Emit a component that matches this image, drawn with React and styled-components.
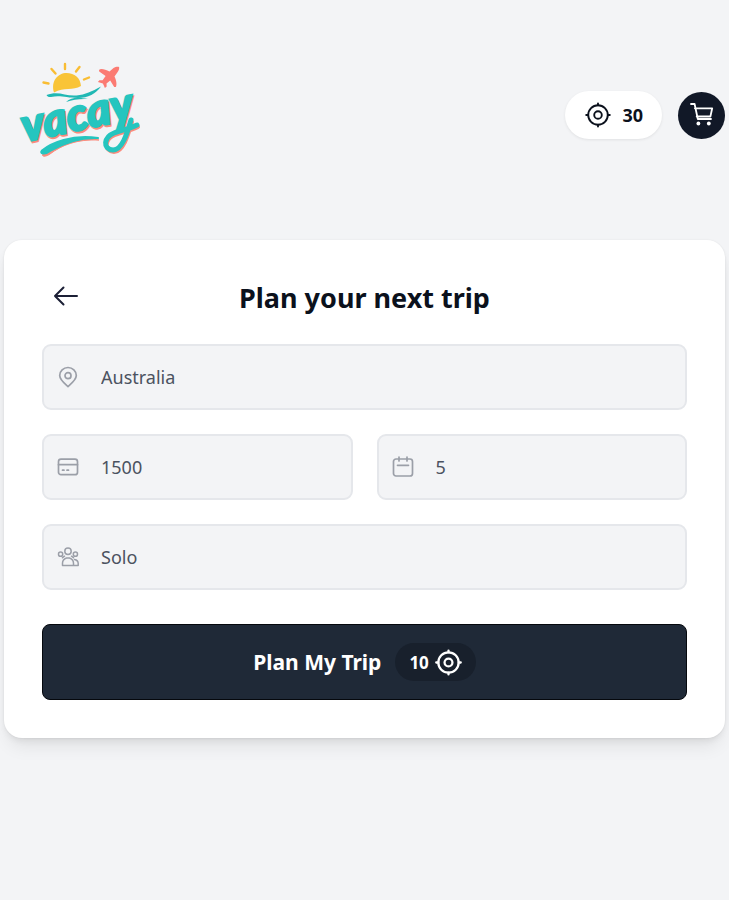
import React from "react";
import styled, { createGlobalStyle } from "styled-components";

const GlobalStyle = createGlobalStyle`
  * { box-sizing: border-box; }
  body {
    margin: 0;
    min-height: 100vh;
    background: #f3f4f6;
    color: #0b111c;
    font-family: "Noto Sans", "Open Sans", sans-serif;
  }
  button, input { font: inherit; }
`;

const Page = styled.div`
  padding: 52px 4px 40px;
`;

const Header = styled.header`
  display: flex;
  align-items: center;
  justify-content: space-between;
  height: 126px;
  margin-bottom: 62px;
`;

const HomeLink = styled.a`
  display: block;
  margin: 0 0 8px 12px;
`;

const LogoArt = styled.svg`
  display: block;
  width: 130px;
  height: 110px;
  overflow: visible;
`;

const LogoText = styled.text`
  font-family: Lato, sans-serif;
  font-weight: 900;
  font-style: italic;
  font-size: 46px;
`;

const Actions = styled.div`
  display: flex;
  align-items: center;
  gap: 16px;
`;

const Balance = styled.div`
  display: flex;
  align-items: center;
  gap: 11px;
  height: 48px;
  padding: 0 19px 0 20px;
  border-radius: 24px;
  background: #fff;
  box-shadow: 0 1px 3px rgba(0, 0, 0, 0.08);
  font-size: 18px;
  font-weight: 700;
`;

const CartButton = styled.button`
  display: grid;
  place-items: center;
  width: 47px;
  height: 47px;
  padding: 0;
  border: 0;
  border-radius: 50%;
  background: #111827;
  color: #fff;
  cursor: pointer;
`;

const Card = styled.main`
  padding: 38px;
  border-radius: 18px;
  background: #fff;
  box-shadow: 0 0 2px rgba(0, 0, 0, 0.08), 0 12px 18px -4px rgba(0, 0, 0, 0.08),
    0 4px 7px -2px rgba(0, 0, 0, 0.08);
`;

const CardHeader = styled.div`
  display: grid;
  grid-template-columns: 48px 1fr 48px;
  align-items: center;
  height: 40px;
  margin-bottom: 26px;
`;

const BackButton = styled.button`
  display: grid;
  place-items: center;
  height: 36px;
  margin-bottom: 4px;
  padding: 0;
  border: 0;
  background: none;
  color: #1c2036;
  cursor: pointer;
`;

const Title = styled.h1`
  margin: 0;
  font-size: 27px;
  line-height: 40px;
  font-weight: 700;
  text-align: center;
`;

const Form = styled.form`
  display: grid;
  grid-template-columns: repeat(2, minmax(0, 1fr));
  gap: 24px;
`;

const Field = styled.label`
  display: flex;
  align-items: center;
  gap: 22px;
  grid-column: ${(p) => (p.$wide ? "1 / -1" : "auto")};
  height: 66px;
  padding: 0 13px;
  border: 2px solid #e5e7eb;
  border-radius: 9px;
  background: #f3f4f6;
  color: #9b9fa8;
`;

const TextInput = styled.input`
  flex: 1;
  min-width: 0;
  padding: 0;
  border: 0;
  outline: 0;
  background: none;
  color: #4b5260;
  font-size: 18px;
  line-height: 28px;
`;

const SubmitButton = styled.button`
  grid-column: 1 / -1;
  display: flex;
  align-items: center;
  justify-content: center;
  gap: 14px;
  height: 76px;
  margin-top: 10px;
  border: 1px solid #05080d;
  border-radius: 8px;
  background: #1f2937;
  color: #fff;
  font-size: 21px;
  font-weight: 700;
  cursor: pointer;
`;

const Cost = styled.span`
  display: flex;
  align-items: center;
  gap: 6px;
  height: 38px;
  padding: 0 14px;
  border-radius: 19px;
  background: #18202c;
  font-size: 17px;
`;

const Icon = styled.svg.attrs({
  fill: "none",
  stroke: "currentColor",
  strokeLinecap: "round",
  strokeLinejoin: "round",
  "aria-hidden": true,
})`
  flex: none;
  display: block;
  width: ${(p) => p.$size}px;
  height: ${(p) => p.$size}px;
`;

function CoinIcon({ size, weight }) {
  return (
    <Icon $size={size} viewBox="0 0 26 26" strokeWidth={weight}>
      <circle cx="13" cy="13" r="9.8" />
      <circle cx="13" cy="13" r="3.8" />
      <path d="M13 1.5v1.7M13 22.8v1.7M1.2 13h2M22.8 13h2" />
    </Icon>
  );
}

function CartIcon() {
  return (
    <Icon $size={26} viewBox="0 0 26 26" strokeWidth="1.8">
      <path d="M2 2h3.6l3.2 15h13.2M5.9 6.3h17.3l-1.8 8.2H7.7" />
      <circle cx="9.4" cy="21.5" r="1.9" fill="currentColor" stroke="none" />
      <circle cx="19.8" cy="21.5" r="1.9" fill="currentColor" stroke="none" />
    </Icon>
  );
}

function ArrowIcon() {
  return (
    <Icon $size={26} viewBox="0 0 26 26" strokeWidth="2">
      <path d="M24 13H2M10.5 4.5 2 13l8.5 8.5" />
    </Icon>
  );
}

function PinIcon() {
  return (
    <Icon $size={22} viewBox="0 0 22 22" strokeWidth="1.7">
      <path d="M11 20.5C7 17 2.7 13.7 2.7 9.5a8.3 8 0 0 1 16.6 0c0 4.2-4.3 7.5-8.3 11Z" />
      <circle cx="11" cy="9.7" r="3" />
    </Icon>
  );
}

function CardIcon() {
  return (
    <Icon $size={22} viewBox="0 0 22 22" strokeWidth="1.7">
      <rect x="1.5" y="3.2" width="19" height="15.5" rx="2.5" />
      <path d="M1.5 8.7h19M5.5 14.2h1.5M10 14.2h1.5" />
    </Icon>
  );
}

function CalendarIcon() {
  return (
    <Icon $size={22} viewBox="0 0 22 22" strokeWidth="1.7">
      <rect x="1.5" y="3" width="19" height="17" rx="2.5" />
      <path d="M7 1v4M15 1v4M5.5 9.3h11" />
    </Icon>
  );
}

function PeopleIcon() {
  return (
    <Icon $size={22} viewBox="0 0 22 22" strokeWidth="1.5">
      <circle cx="11" cy="5.2" r="3.2" />
      <circle cx="3.6" cy="8.2" r="2.1" />
      <circle cx="18.4" cy="8.2" r="2.1" />
      <path d="M5.5 19.5v-2.2c0-2.7 1.5-4.5 4-5.3h3c2.5.8 4 2.6 4 5.3v2.2ZM17.5 13.5c2.5.5 3.7 1.8 3.7 4v2h-4.700M5.500 11.700l2-1.500M16.500 11.700l-2-1.500" />
    </Icon>
  );
}

function Logo() {
  return (
    <LogoArt viewBox="0 0 130 110" role="img" aria-label="Vacay">
      <path
        d="M27.5 26.500l5 1M35.500 13l4 4.500M49 8v5M63.500 11l-3.500 4.500M73 21.500l-5 2"
        fill="none"
        stroke="#f9bd34"
        strokeWidth="2.4"
        strokeLinecap="round"
      />
      <path
        d="M38 36.500C34.500 25 42 17 50.500 17c8 0 14 5 14.500 13-8 5-17 1-27 6.500Z"
        fill="#f9c437"
      />
      <path
        d="M30.500 39c12-4.500 19 1.500 30 .5 9-1 15-4 24.500-9-5 7-13 11.500-23 11.500-12 0-17-3-27-1-2 .3-4-.5-4.500-2Z"
        fill="#20b8b4"
      />
      <path d="M50 46c6-6 14-4.500 22-3-8-.5-15 .5-22 3Z" fill="#20b8b4" />
      <path
        d="M83 14c1.500-1.800 6-.8 10.500 1.500l4-3.500c2-1.500 5-1.500 5.500-1 .6.6 0 3.500-1.500 5.200l-3 4.300c2 4 2.600 8.500 1.300 10.500h-1.600l-4-6.500-3.700 3 .2 3-1.800 1.500-2-4.500-5-1.500 1.500-1.800h3.200l3-4.200-6.400-4.500Z"
        fill="#fb7b73"
      />
      <g fill="none" strokeLinecap="round">
        <path
          d="M116 66C112 80 107 96 98 96c-11-1-9-13 1-17 7-3 15-4 23-8"
          stroke="#fb8b7d"
          strokeWidth="4"
        />
        <g transform="rotate(-12 8 84)">
          <LogoText x="9" y="88" fill="#fb8b7d" stroke="#fb8b7d" strokeWidth="2">vacay</LogoText>
        </g>
        <path
          d="M115 64C111 78 106 94 97 94c-11-1-9-13 1-17 7-3 15-4 23-8"
          stroke="#25c5bf"
          strokeWidth="5"
        />
        <g transform="rotate(-12 8 84)">
          <LogoText x="8" y="86" fill="#25c5bf" stroke="#25c5bf" strokeWidth="2">vacay</LogoText>
        </g>
      </g>
      <path
        d="M27 98c8-9 28-19 56-14-22-1-37 5-49 14-4 3-9 3-7 0Z"
        fill="#fb8b7d"
        stroke="#fb8b7d"
        strokeWidth="1"
      />
      <path
        d="M26 94.500C35 87 56 78 82 82c-20-1-36 6-48 13-5 4-11 3-8-.5Z"
        fill="#25c5bf"
        stroke="#25c5bf"
        strokeWidth="2"
        strokeLinejoin="round"
      />
    </LogoArt>
  );
}

export default function App() {
  return (
    <>
      <GlobalStyle />
      <Page>
        <Header>
          <HomeLink href="#home">
            <Logo />
          </HomeLink>
          <Actions>
            <Balance>
              <CoinIcon size={26} weight={1.9} />
              30
            </Balance>
            <CartButton type="button" aria-label="Cart">
              <CartIcon />
            </CartButton>
          </Actions>
        </Header>
        <Card>
          <CardHeader>
            <BackButton type="button" aria-label="Back">
              <ArrowIcon />
            </BackButton>
            <Title>Plan your next trip</Title>
          </CardHeader>
          <Form onSubmit={(e) => e.preventDefault()}>
            <Field $wide>
              <PinIcon />
              <TextInput aria-label="Destination" defaultValue="Australia" />
            </Field>
            <Field>
              <CardIcon />
              <TextInput aria-label="Budget" inputMode="numeric" defaultValue="1500" />
            </Field>
            <Field>
              <CalendarIcon />
              <TextInput aria-label="Days" inputMode="numeric" defaultValue="5" />
            </Field>
            <Field $wide>
              <PeopleIcon />
              <TextInput aria-label="Travellers" defaultValue="Solo" />
            </Field>
            <SubmitButton type="submit">
              Plan My Trip
              <Cost>
                10
                <CoinIcon size={27} weight={2.2} />
              </Cost>
            </SubmitButton>
          </Form>
        </Card>
      </Page>
    </>
  );
}
